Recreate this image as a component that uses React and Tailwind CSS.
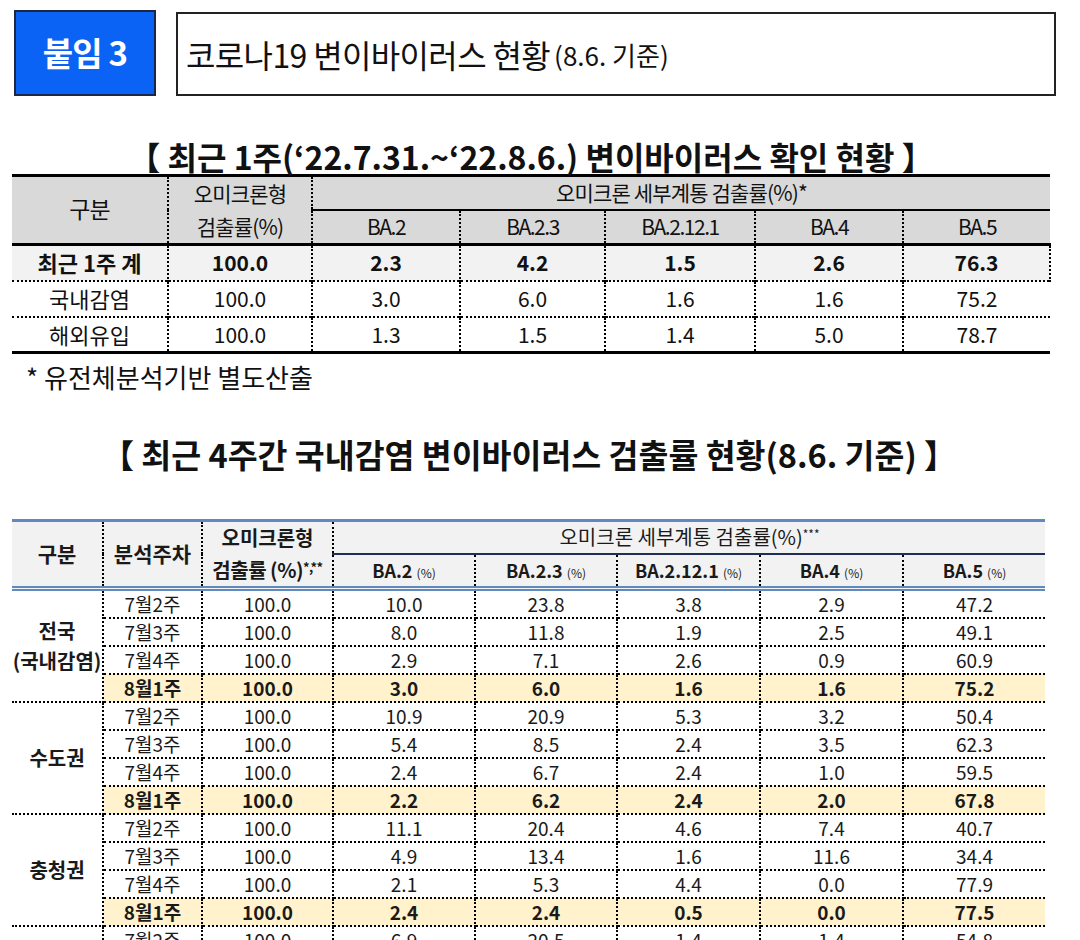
import React from 'react'

const font = { fontFamily: '"Noto Sans CJK KR", "Noto Sans", sans-serif' }

const weekly = [
  { id: 'recent', label: '최근 1주 계', total: '100.0', vals: ['2.3', '4.2', '1.5', '2.6', '76.3'], bold: true },
  { id: 'domestic', label: '국내감염', total: '100.0', vals: ['3.0', '6.0', '1.6', '1.6', '75.2'] },
  { id: 'overseas', label: '해외유입', total: '100.0', vals: ['1.3', '1.5', '1.4', '5.0', '78.7'] },
]

const regions = [
  {
    name: ['전국', '(국내감염)'],
    rows: [
      ['7월2주', '100.0', '10.0', '23.8', '3.8', '2.9', '47.2'],
      ['7월3주', '100.0', '8.0', '11.8', '1.9', '2.5', '49.1'],
      ['7월4주', '100.0', '2.9', '7.1', '2.6', '0.9', '60.9'],
      ['8월1주', '100.0', '3.0', '6.0', '1.6', '1.6', '75.2'],
    ],
  },
  {
    name: ['수도권'],
    rows: [
      ['7월2주', '100.0', '10.9', '20.9', '5.3', '3.2', '50.4'],
      ['7월3주', '100.0', '5.4', '8.5', '2.4', '3.5', '62.3'],
      ['7월4주', '100.0', '2.4', '6.7', '2.4', '1.0', '59.5'],
      ['8월1주', '100.0', '2.2', '6.2', '2.4', '2.0', '67.8'],
    ],
  },
  {
    name: ['충청권'],
    rows: [
      ['7월2주', '100.0', '11.1', '20.4', '4.6', '7.4', '40.7'],
      ['7월3주', '100.0', '4.9', '13.4', '1.6', '11.6', '34.4'],
      ['7월4주', '100.0', '2.1', '5.3', '4.4', '0.0', '77.9'],
      ['8월1주', '100.0', '2.4', '2.4', '0.5', '0.0', '77.5'],
    ],
  },
  {
    // continues below the fold
    name: ['호남권'],
    rows: [
      ['7월2주', '100.0', '6.9', '20.5', '1.4', '1.4', '54.8'],
      ['7월3주', '100.0', '4.1', '10.2', '2.0', '2.0', '58.2'],
      ['7월4주', '100.0', '2.0', '5.9', '1.3', '1.0', '70.1'],
      ['8월1주', '100.0', '1.8', '4.9', '0.7', '1.5', '80.4'],
    ],
  },
]

const strains = ['BA.2', 'BA.2.3', 'BA.2.12.1', 'BA.4', 'BA.5']

export default function App() {
  return (
    <div className="w-[1080px] bg-white text-[#111]" style={font}>
      {/* top banner */}
      <div className="flex items-stretch gap-5 pl-[14px] pt-[10px]">
        <div className="flex h-[86px] w-[142px] items-center justify-center border-2 border-[#1c2745] bg-[#0b63f6]">
          <span className="text-[33px] font-bold tracking-tight text-white">붙임 3</span>
        </div>
        <div className="mt-[2px] flex h-[84px] w-[880px] items-center border-2 border-[#222] px-2">
          <span className="text-[32px] tracking-[-0.02em]">코로나19 변이바이러스 현황</span>
          <span className="ml-1 text-[26px]">(8.6. 기준)</span>
        </div>
      </div>

      {/* table 1 */}
      <h2 className="mt-[40px] pr-[18px] text-center text-[32px] font-bold leading-[40px]">
        【 최근 1주(‘22.7.31.~‘22.8.6.) 변이바이러스 확인 현황 】
      </h2>
      <div className="-mt-[2px] pl-[12px]">
        <table className="w-[1038px] table-fixed border-collapse border-t-[3px] border-b-[3px] border-black text-center">
          <colgroup>
            <col className="w-[156px]" />
            <col className="w-[144px]" />
            <col className="w-[148px]" />
            <col className="w-[145px]" />
            <col className="w-[150px]" />
            <col className="w-[148px]" />
            <col className="w-[147px]" />
          </colgroup>
          <thead className="bg-[#d9d9d9] text-[21px] tracking-[-0.04em]">
            <tr className="h-[32px]">
              <th rowSpan={2} className="border-r-2 border-dotted border-black pb-1 text-[23px] font-normal">구분</th>
              <th rowSpan={2} className="border-r-2 border-dotted border-black font-normal leading-[33px]">
                오미크론형<br />검출률(%)
              </th>
              <th colSpan={5} className="border-b-2 border-solid border-black font-normal">
                오미크론 세부계통 검출률(%)*
              </th>
            </tr>
            <tr className="h-[33px] border-b-[3px] border-black">
              {strains.map((s, i) => (
                <th
                  key={s}
                  className={`font-normal tracking-[-0.07em] ${i < 4 ? 'border-r-2 border-dotted border-black' : ''}`}
                >
                  {s}
                </th>
              ))}
            </tr>
          </thead>
          <tbody className="text-[21px]">
            {weekly.map((r, ri) => (
              <tr
                key={r.id}
                className={`h-[36px] ${r.bold ? 'bg-[#f2f2f2] font-bold' : ''} ${ri < 2 ? 'border-b-2 border-dotted border-black' : ''}`}
              >
                <td className={`border-r-2 border-dotted border-black text-[22px] ${r.bold ? 'font-semibold' : ''}`}>{r.label}</td>
                <td className="border-r-2 border-dotted border-black">{r.total}</td>
                {r.vals.map((v, i) => (
                  <td
                    key={i}
                    className={i < 4 || r.bold ? 'border-r-2 border-dotted border-black' : ''}
                  >
                    {v}
                  </td>
                ))}
              </tr>
            ))}
          </tbody>
        </table>
      </div>
      <p className="mt-[4px] pl-[26px] text-[26px] leading-[38px]">* 유전체분석기반 별도산출</p>

      {/* table 2 */}
      <h2 className="mt-[38px] pr-[22px] text-center text-[32.5px] font-bold leading-[40px]">
        【 최근 4주간 국내감염 변이바이러스 검출률 현황(8.6. 기준) 】
      </h2>
      <div className="pl-[12px] pt-[45px]">
        <table className="w-[1033px] table-fixed border-collapse border-t-[3px] border-[#5f8ac0] text-center text-[#1a1a1a]">
          <colgroup>
            <col className="w-[91px]" />
            <col className="w-[99px]" />
            <col className="w-[131px]" />
            <col className="w-[142px]" />
            <col className="w-[142px]" />
            <col className="w-[143px]" />
            <col className="w-[143px]" />
            <col className="w-[142px]" />
          </colgroup>
          <thead className="bg-[#f2f2f2]">
            <tr className="h-[33px]">
              <th rowSpan={2} className="border-r-2 border-dotted border-black text-[21px] font-semibold">구분</th>
              <th rowSpan={2} className="border-r-2 border-dotted border-black text-[21px] font-semibold">분석주차</th>
              <th rowSpan={2} className="border-r-2 border-dotted border-black text-[20px] font-semibold leading-[32px]">
                오미크론형<br />
                <span className="whitespace-nowrap tracking-tight">검출률 (%)<sup className="text-[13px]">*,**</sup></span>
              </th>
              <th colSpan={5} className="border-b-2 border-solid border-[#1f2f55] text-[20px] font-normal">
                오미크론 세부계통 검출률(%)<sup className="text-[12px]">***</sup>
              </th>
            </tr>
            <tr className="h-[35px] border-b-[5px] border-double border-[#5f8ac0]">
              {strains.map((s, i) => (
                <th
                  key={s}
                  className={`text-[18px] font-semibold ${i < 4 ? 'border-r-2 border-dotted border-black' : ''}`}
                >
                  {s} <span className="text-[12px] font-normal">(%)</span>
                </th>
              ))}
            </tr>
          </thead>
          <tbody className="text-[19px]">
            {regions.map((g) =>
              g.rows.map((row, ri) => {
                const hl = row[0] === '8월1주'
                return (
                  <tr key={g.name[0] + ri} className="h-[28px]">
                    {ri === 0 && (
                      <td
                        rowSpan={g.rows.length}
                        className="border-r-2 border-b-2 border-dotted border-black text-[20px] font-semibold leading-[30px]"
                      >
                        {g.name.map((n) => (
                          <div key={n}>{n}</div>
                        ))}
                      </td>
                    )}
                    {row.map((v, i) => (
                      <td
                        key={i}
                        className={`py-0 leading-[26px] ${hl ? 'bg-[#fff2cc] font-bold' : ''} ${i < 6 ? 'border-r-2' : ''} border-b-2 border-dotted border-black`}
                      >
                        {v}
                      </td>
                    ))}
                  </tr>
                )
              })
            )}
          </tbody>
        </table>
      </div>
    </div>
  )
}
